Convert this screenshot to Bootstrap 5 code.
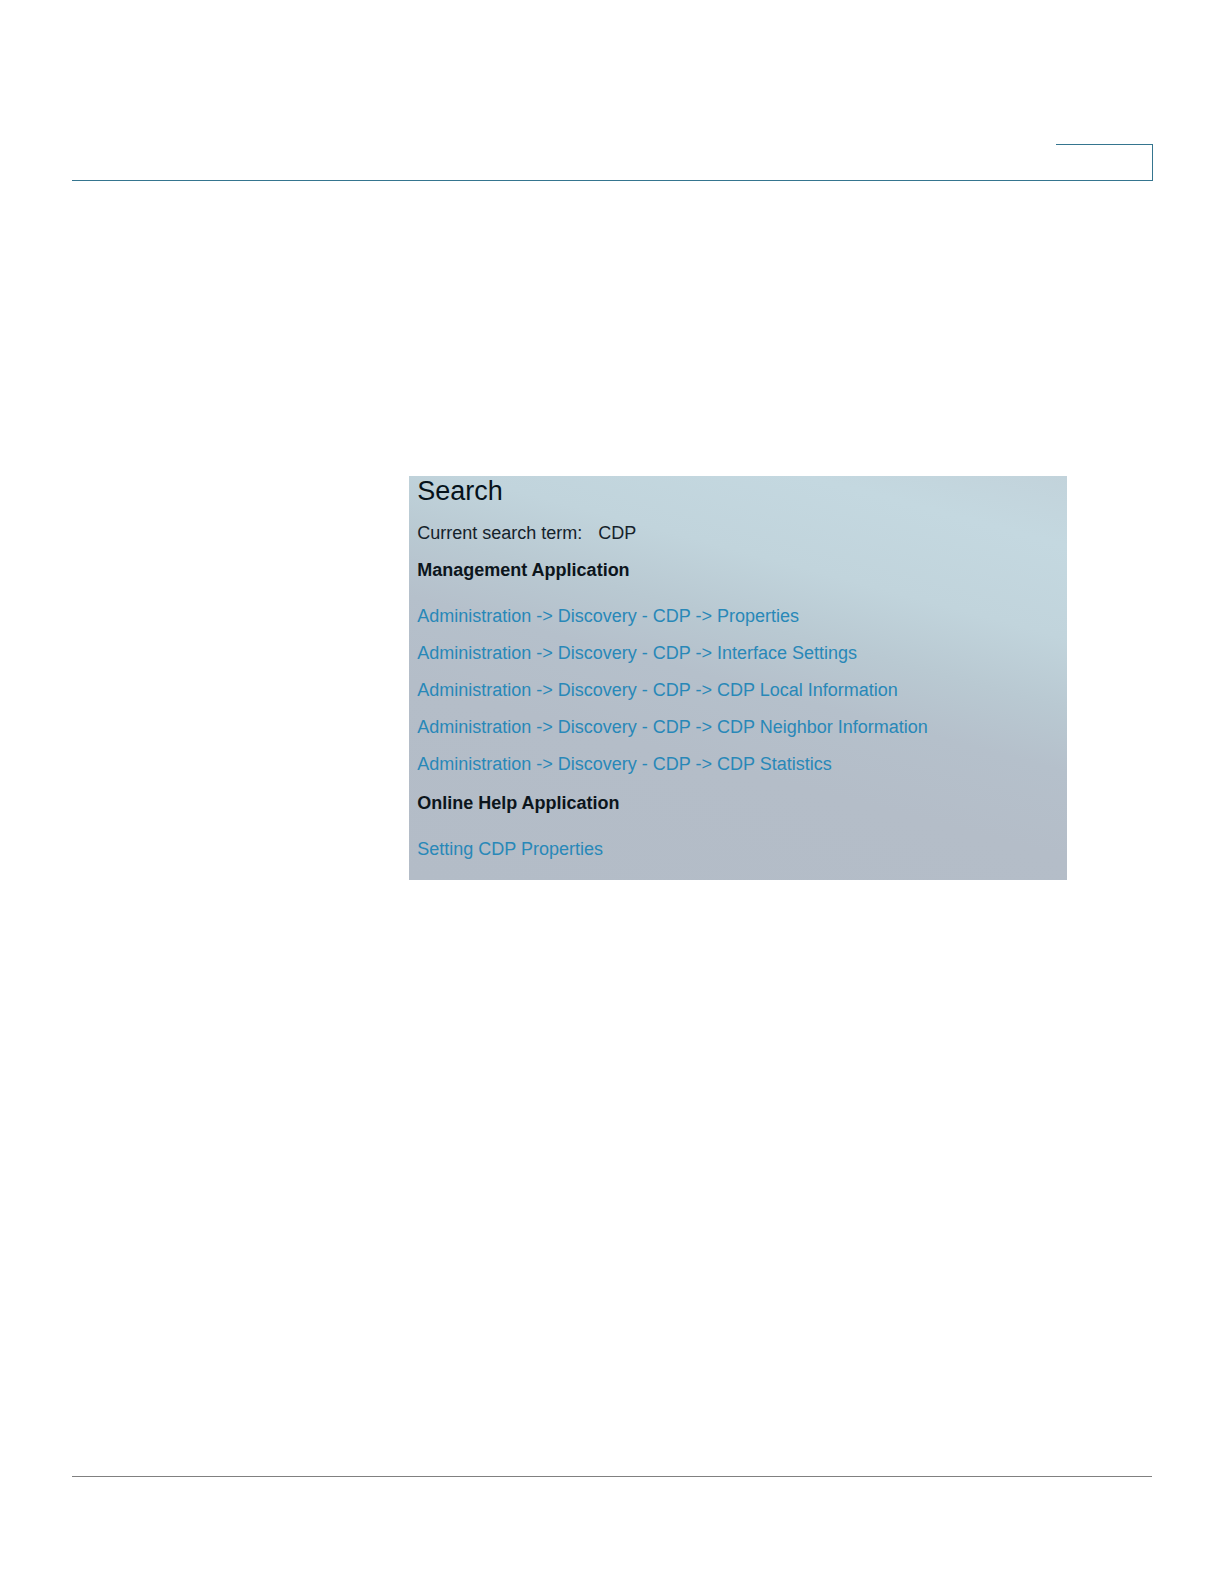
<!DOCTYPE html>
<html lang="en">
<head>
<meta charset="utf-8">
<meta name="viewport" content="width=device-width, initial-scale=1">
<title>Search</title>
<link href="https://cdn.jsdelivr.net/npm/bootstrap@5.3.0/dist/css/bootstrap.min.css" rel="stylesheet">
<style>
  body { font-family: "Liberation Sans", Arial, sans-serif; font-size: 18px; line-height: 37px; color: #15222b; background: #fff; }
  .sheet { padding: 144px 71px 107px 72px; }
  .page-head { border-bottom: 1px solid #35758f; }
  .head-tab { width: 97px; height: 36px; border-top: 1px solid #35758f; border-right: 1px solid #35758f; }
  .page-body { padding: 295px 0 48px 31.2%; }
  .search-panel {
    max-width: 658px; padding: 0 8px 12px;
    background: linear-gradient(195deg, #c2d3db 0%, #c4d8e0 12%, #c1d4dc 28%, #b9c9d2 40%, #b5c0cb 51%, #b4bdc8 66%, #b3bcc7 100%);
  }
  .search-panel h1 { font-size: 27px; line-height: 30px; font-weight: 400; color: #06121a; margin-bottom: 9px; }
  .search-panel h2 { font-size: 18px; line-height: 37px; font-weight: 700; color: #0c151c; }
  .result-list { padding: 9px 0 2px; }
  .result-list a { color: #2888b8; }
  .page-foot { border-top: 1px solid #808080; margin-right: 1px; }
</style>
</head>
<body>
<div class="sheet min-vh-100 d-flex flex-column">
  <header class="page-head d-flex justify-content-end">
    <div class="head-tab"></div>
  </header>
  <main class="page-body">
    <section class="search-panel">
      <h1>Search</h1>
      <div class="d-flex gap-3"><span>Current search term:</span><span>CDP</span></div>
      <h2 class="mb-0">Management Application</h2>
      <ul class="result-list list-unstyled mb-0">
        <li><a class="text-decoration-none" href="#">Administration -&gt; Discovery - CDP -&gt; Properties</a></li>
        <li><a class="text-decoration-none" href="#">Administration -&gt; Discovery - CDP -&gt; Interface Settings</a></li>
        <li><a class="text-decoration-none" href="#">Administration -&gt; Discovery - CDP -&gt; CDP Local Information</a></li>
        <li><a class="text-decoration-none" href="#">Administration -&gt; Discovery - CDP -&gt; CDP Neighbor Information</a></li>
        <li><a class="text-decoration-none" href="#">Administration -&gt; Discovery - CDP -&gt; CDP Statistics</a></li>
      </ul>
      <h2 class="mb-0">Online Help Application</h2>
      <ul class="result-list list-unstyled mb-0 pb-0">
        <li><a class="text-decoration-none" href="#">Setting CDP Properties</a></li>
      </ul>
    </section>
  </main>
  <footer class="page-foot mt-auto"></footer>
</div>
<script src="https://cdn.jsdelivr.net/npm/bootstrap@5.3.0/dist/js/bootstrap.bundle.min.js"></script>
</body>
</html>
